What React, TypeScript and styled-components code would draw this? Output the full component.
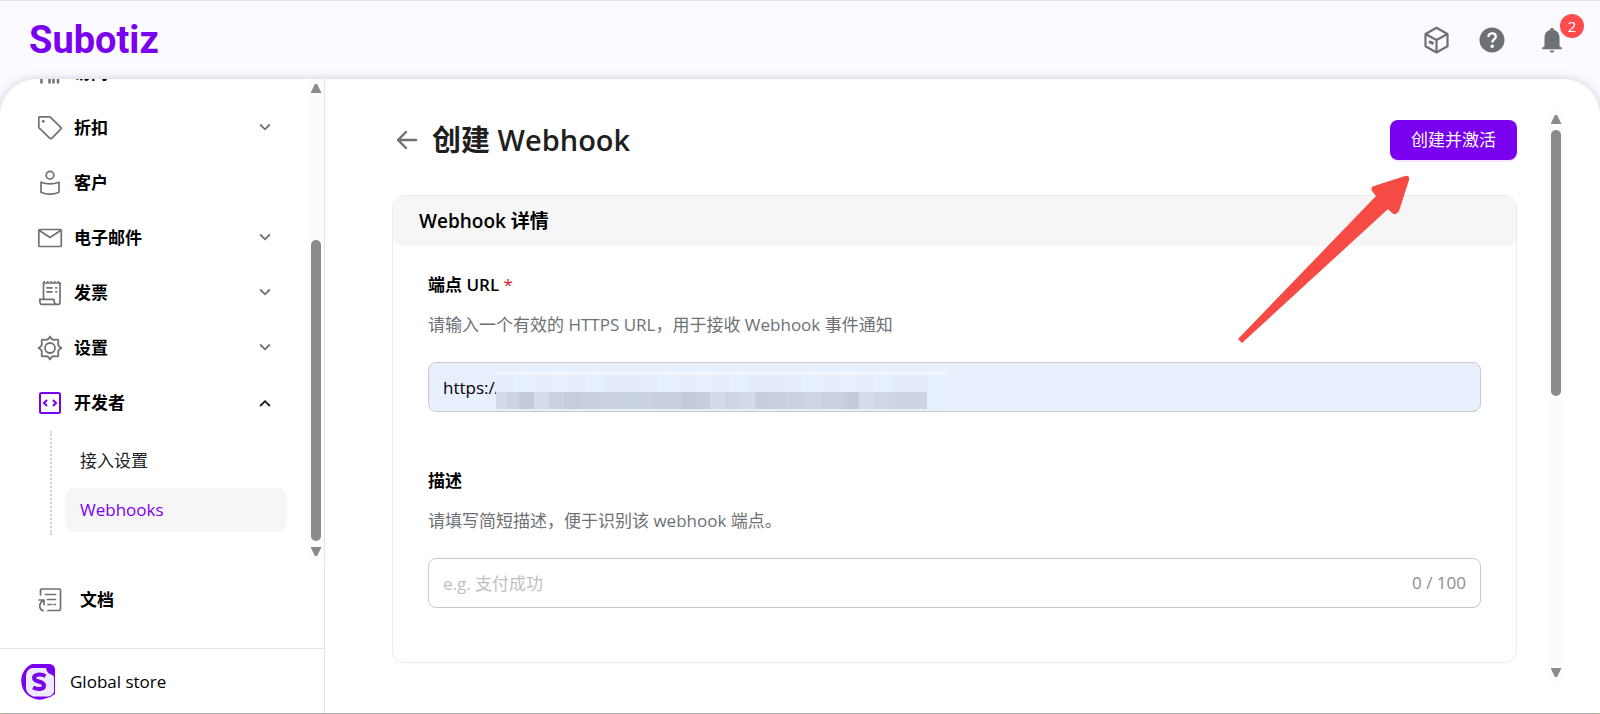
import React from "react";
import styled, { createGlobalStyle } from "styled-components";

const sans = `"Open Sans", "Noto Sans CJK SC", sans-serif`;

const GlobalStyle = createGlobalStyle`
  *, *::before, *::after { box-sizing: border-box; }
  body { margin: 0; background: #fbfaff; font-family: ${sans}; font-size: 17px; line-height: 24px; color: #000; }
  button, input { font: inherit; color: inherit; }
  h1, h2, p, ul { margin: 0; padding: 0; }
  ul { list-style: none; }
`;

const Shell = styled.div`
  height: 100vh;
  display: flex;
  flex-direction: column;
  border-top: 1px solid #e4e4e6;
  border-bottom: 1px solid #bebcb4;
`;

const Header = styled.header`
  flex: none;
  height: 78px;
  padding: 0 16px 0 29px;
  display: flex;
  align-items: center;
  justify-content: space-between;
`;

const Logo = styled.a`
  font: 700 38px/48px Roboto, sans-serif;
  color: #7a00f0;
  text-decoration: none;
`;

const HeaderActions = styled.div`
  display: flex;
  align-items: center;
  gap: 24px;
`;

const IconButton = styled.button`
  position: relative;
  width: 32px;
  height: 32px;
  padding: 0;
  border: 0;
  background: none;
  color: #6d7175;
  display: grid;
  place-items: center;
`;

const BellButton = styled(IconButton)`
  margin: 0 16px 0 4px;
`;

const Badge = styled.span`
  position: absolute;
  top: -10px;
  right: -16px;
  width: 24px;
  height: 24px;
  border-radius: 12px;
  background: #ff4d4f;
  color: #fff;
  font-size: 15px;
  line-height: 24px;
  text-align: center;
`;

const Panel = styled.div`
  flex: 1;
  min-height: 0;
  display: flex;
  background: #fff;
  border-radius: 36px 36px 0 0;
  box-shadow: 0 0 8px rgba(60, 50, 90, 0.24);
  overflow: hidden;
`;

const Sidebar = styled.aside`
  flex: none;
  width: 325px;
  border-right: 1px solid #e3e3e5;
  display: flex;
  flex-direction: column;
`;

const NavArea = styled.div`
  flex: 1;
  min-height: 0;
  display: flex;
`;

const Nav = styled.nav`
  flex: 1;
  overflow: hidden;
  display: flex;
  flex-direction: column;
  justify-content: flex-end;
  padding: 0 21px 26px 37px;
`;

const NavRow = styled.a`
  flex: none;
  height: 55px;
  padding-right: 16px;
  display: flex;
  align-items: center;
  gap: 11px;
  color: #6d7175;
  text-decoration: none;
`;

const NavLabel = styled.span`
  flex: 1;
  color: #000;
  font-weight: 700;
`;

const SubList = styled.ul`
  margin: 1px 0 0 13px;
  padding: 8px 0 3px 13px;
  border-left: 2px dotted #d2d2d4;
  display: flex;
  flex-direction: column;
  gap: 5px;
`;

const SubLink = styled.a<{ $active?: boolean }>`
  display: block;
  padding: 10px 15px;
  border-radius: 10px;
  background: ${(p) => (p.$active ? "#f6f6f6" : "transparent")};
  color: ${(p) => (p.$active ? "#7a00f0" : "#202223")};
  text-decoration: none;
`;

const DocsRow = styled(NavRow)`
  height: 87px;
  padding-bottom: 9px;
  margin: 0 37px;
  gap: 17px;
`;

const StoreRow = styled.a`
  height: 65px;
  padding: 2px 21px 0;
  display: flex;
  align-items: center;
  gap: 13px;
  border-top: 1px solid #e3e3e5;
  color: #000;
  text-decoration: none;
`;

const Track = styled.div`
  flex: none;
  width: 16px;
  padding: 5px 0;
  display: flex;
  flex-direction: column;
  align-items: center;
  gap: 6px;
  background: #fcfcfc;
`;

const Arrow = styled.span<{ $down?: boolean }>`
  width: 11px;
  height: 9px;
  background: #8b8b8b;
  clip-path: ${(p) => (p.$down ? "polygon(0 0, 100% 0, 60% 100%, 40% 100%)" : "polygon(40% 0, 60% 0, 100% 100%, 0 100%)")};
`;

const Rail = styled.div<{ $start: number; $size: number }>`
  flex: 1;
  width: 10px;
  display: grid;
  grid-template-rows: ${(p) => `${p.$start}fr ${p.$size}fr ${100 - p.$start - p.$size}fr`};
  &::before { content: ""; grid-row: 2; border-radius: 5px; background: #8b8b8b; }
`;

const Main = styled.main`
  flex: 1;
  min-width: 0;
  display: flex;
  padding: 31px 36px 31px 67px;
`;

const Content = styled.div`
  flex: 1;
  min-width: 0;
  padding: 10px 31px 0 0;
`;

const TitleRow = styled.div`
  display: flex;
  align-items: center;
  height: 40px;
  margin-bottom: 35px;
`;

const BackButton = styled(IconButton)`
  width: 30px;
  margin-right: 10px;
`;

const Title = styled.h1`
  flex: 1;
  font-size: 29px;
  line-height: 40px;
  font-weight: 700;
  color: #1f1f1f;
`;

const Latin = styled.span`
  font-weight: 600;
`;

const PrimaryButton = styled.button`
  width: 127px;
  height: 40px;
  padding: 0;
  border: 0;
  border-radius: 8px;
  background: #7a00f0;
  color: #fff;
  box-shadow: 0 2px 0 #f7e6ff;
`;

const Card = styled.section`
  border: 1px solid #ebebeb;
  border-radius: 12px;
`;

const CardHeader = styled.h2`
  padding: 13px 26px;
  border-radius: 12px 12px 8px 8px;
  background: #f6f6f6;
  font-size: 19px;
  line-height: 24px;
  font-weight: 700;
`;

const Fields = styled.div`
  padding: 27px 35px 54px;
  display: flex;
  flex-direction: column;
  gap: 57px;
`;

const Field = styled.div`
  display: flex;
  flex-direction: column;
`;

const Label = styled.label`
  font-weight: 700;
`;

const Required = styled.span`
  font-weight: 400;
  color: #e02020;
`;

const Hint = styled.p`
  margin: 16px 0 25px;
  color: #6d7175;
`;

const InputBox = styled.div<{ $filled?: boolean }>`
  position: relative;
  height: 50px;
  padding: 0 14px;
  display: flex;
  align-items: center;
  border: 1px solid #c9cacd;
  border-radius: 8px;
  background: ${(p) => (p.$filled ? "#e8effd" : "#fff")};
`;

const TextInput = styled.input`
  flex: 1;
  min-width: 0;
  height: 100%;
  padding: 0;
  border: 0;
  outline: 0;
  background: none;
  &::placeholder { color: #bfbfbf; opacity: 1; }
`;

const Counter = styled.span`
  color: #8c8c8c;
`;

const Mosaic = styled.svg`
  position: absolute;
  top: 9px;
  left: 67px;
`;

const ArrowMark = styled.svg`
  position: absolute;
  top: 174px;
  right: 188px;
  pointer-events: none;
`;

const icon = { width: 26, height: 26, viewBox: "0 0 26 26", fill: "none", stroke: "currentColor", strokeWidth: 1.5, strokeLinejoin: "round" as const, strokeLinecap: "round" as const, "aria-hidden": true };

const PeopleIcon = () => (
  <svg {...icon}><path d="M4.500 23.500v-5M12.500 23.500v-6M16.500 23.500v-6M21 23.500v-5" strokeWidth={2.500} strokeLinecap="butt" /></svg>
);
const TagIcon = () => (
  <svg {...icon}><path d="M2.500 1.800H13L24 12.600a1 1 0 0 1 0 1.300l-9.300 9.400a1.200 1.200 0 0 1-1.700 0L1.800 12.700V2.500a.7.7 0 0 1 .7-.7Z" strokeWidth={1.700} /><circle cx="6.200" cy="6.300" r="1" fill="currentColor" strokeWidth={1} /></svg>
);
const CustomerIcon = () => (
  <svg {...icon} strokeWidth={1.700}><circle cx="13" cy="5.200" r="3.800" /><path d="M4 12.200c6 2.200 12 2.200 18 0v10c-5.500 2.400-12.500 2.400-18 0Z" /></svg>
);
const MailIcon = () => (
  <svg {...icon} strokeWidth={1.700}><rect x="1.800" y="4.500" width="22.500" height="17" rx="1" /><path d="M2.500 5.500 13 12.500l10.700-7" /></svg>
);
const InvoiceIcon = () => (
  <svg {...icon} strokeWidth={1.700}><path d="M6.500 18.500V3M23 3v19.500c0 1-1 1.800-2 1.800H4.500c-1.400 0-1.700-2-1.700-5h14c.3 3 .8 5 2.700 5" /><path d="M6.500 3h16.500" /><path d="M6.500 1.800h16.500" strokeDasharray="1.500 2" strokeLinecap="butt" /><path d="M10 7.800h5M10 11.800h5M18.800 7.800h.8M18.800 11.800h.8" /></svg>
);
const GearIcon = () => (
  <svg {...icon} strokeWidth={1.800}>
    <path d="M13 1.500Q14.500 4.800 17 4.900Q20 4.300 21.100 4.900Q21.700 6 21.100 9Q21.200 11.500 24.500 13Q21.200 14.500 21.100 17Q21.700 20 21.100 21.100Q20 21.700 17 21.100Q14.500 21.200 13 24.500Q11.500 21.200 9 21.100Q6 21.700 4.900 21.100Q4.300 20 4.900 17Q4.800 14.500 1.500 13Q4.800 11.500 4.900 9Q4.300 6 4.900 4.900Q6 4.300 9 4.900Q11.500 4.800 13 1.500Z" />
    <circle cx="13" cy="13" r="5" />
  </svg>
);
const CodeIcon = () => (
  <svg {...icon} stroke="#7a00f0"><rect x="3" y="3" width="20" height="20" rx="1.500" strokeWidth={2} /><path d="m10 10-3 3 3 3M16 10l3 3-3 3" strokeWidth={2} strokeLinecap="butt" strokeLinejoin="miter" /></svg>
);
const DocsIcon = () => (
  <svg {...icon} strokeWidth={1.700}><path d="M3.500 8V3.300c0-.8.5-1.300 1.300-1.300h17.400c.8 0 1.300.5 1.300 1.300v18.900c0 .8-.5 1.300-1.300 1.300H11M8.500 7.500h10M10.500 12.500h8M11 17.500h3.500M17 17.500h1.500" /><path d="M2.200 13H7v4.500M6.800 13C2 16 1 21 6 23.800" /></svg>
);
const Chevron = ({ up }: { up?: boolean }) => (
  <svg width="12" height="10" viewBox="0 0 12 10" fill="none" stroke={up ? "#1a1a1a" : "#6d7175"} strokeWidth="1.800" aria-hidden="true">
    <path d={up ? "M1.200 8 6 3.200l4.800 4.800" : "M1.200 1.500 6 6.300l4.800-4.800"} />
  </svg>
);

const navItems = [
  { label: "访问", Icon: PeopleIcon },
  { label: "折扣", Icon: TagIcon, expandable: true },
  { label: "客户", Icon: CustomerIcon },
  { label: "电子邮件", Icon: MailIcon, expandable: true },
  { label: "发票", Icon: InvoiceIcon, expandable: true },
  { label: "设置", Icon: GearIcon, expandable: true },
  { label: "开发者", Icon: CodeIcon, expandable: true, open: true },
];

const mosaicTop = ["#e5edfd", "#e7eefc", "#e4ecfc", "#e6effd", "#e5edfc", "#e4ebfb", "#e6eefc", "#e5effd"];
const mosaicCells: [number, string][] = [
  [10, "#d3dae9"], [13, "#ccd3e2"], [15, "#c4cad7"], [15, "#d5dcec"], [15, "#cad0df"], [17, "#c6ccda"], [17, "#c8cfdf"], [22, "#c9d1e0"],
  [17, "#c8d2e1"], [17, "#cad1e1"], [13, "#c8cedd"], [15, "#c7cedd"], [14, "#c4cad8"], [14, "#c6ccda"], [15, "#d3daea"], [15, "#cdd4e4"],
  [15, "#d3daea"], [15, "#c6cddc"], [15, "#c7cedc"], [20, "#c9d0df"], [17, "#cdd4e3"], [22, "#c9d0df"], [15, "#c5cbd9"], [15, "#d4dbea"], [15, "#d0d7e7"], [18, "#ccd3e3"], [20, "#ccd3e3"],
];

const ScrollTrack = ({ start, size }: { start: number; size: number }) => (
  <Track aria-hidden="true"><Arrow /><Rail $start={start} $size={size} /><Arrow $down /></Track>
);

const MosaicPattern = () => {
  let x = 0;
  return (
    <Mosaic width="451" height="38" viewBox="0 0 451 38" aria-hidden="true">
      <rect width="451" height="37" fill="#e6effd" />
      <rect width="451" height="3" fill="#f4f6fd" />
      {Array.from({ length: 24 }, (_, i) => <rect key={i} x={i * 18} y="3" width="18" height="17" fill={mosaicTop[(i * 3) % 8]} />)}
      {mosaicCells.map(([w, fill], i) => {
        const cell = <rect key={`c${i}`} x={x} y="20" width={w} height="17" fill={fill} />;
        x += w;
        return cell;
      })}
    </Mosaic>
  );
};

export default function App() {
  return (
    <>
      <GlobalStyle />
      <Shell>
        <Header>
          <Logo href="#">Subotiz</Logo>
          <HeaderActions>
            <IconButton aria-label="产品">
              <svg width="28" height="28" viewBox="0 0 28 28" fill="none" stroke="currentColor" strokeWidth="2.200" strokeLinejoin="round">
                <path d="M14.500 1.800 25.500 8v12.300l-11 6.200-11-6.200V8Z" /><path d="M3.500 8l11 6 11-6M14.500 14v12.500" /><path d="m7 15.500 4.500 2.200" strokeWidth="3" />
              </svg>
            </IconButton>
            <IconButton aria-label="帮助">
              <svg width="26" height="26" viewBox="0 0 26 26">
                <circle cx="13" cy="13" r="12.500" fill="currentColor" />
                <path d="M9.400 10c0-2.300 1.500-3.700 3.700-3.700s3.700 1.400 3.700 3.300c0 2.800-3.600 2.900-3.600 5.900" fill="none" stroke="#fff" strokeWidth="2.300" /><circle cx="13.200" cy="19.200" r="1.700" fill="#fff" />
              </svg>
            </IconButton>
            <BellButton aria-label="通知">
              <svg width="22" height="26" viewBox="0 0 22 26" fill="currentColor">
                <path d="M11 1c1.200 0 2 .8 2 1.900 3.700.9 5.500 3.700 5.500 7.600v8.700l2.300 1.300v1.700H1.200v-1.700l2.300-1.300v-8.700c0-3.900 1.800-6.700 5.500-7.600C9 1.800 9.800 1 11 1ZM8.500 23.500h5L12 25.500h-2Z" />
              </svg>
              <Badge>2</Badge>
            </BellButton>
          </HeaderActions>
        </Header>
        <Panel>
          <Sidebar>
            <NavArea>
              <Nav>
                {navItems.map(({ label, Icon, expandable, open }) => (
                  <NavRow href="#" key={label}>
                    <Icon /><NavLabel>{label}</NavLabel>{expandable && <Chevron up={open} />}
                  </NavRow>
                ))}
                <SubList>
                  <li><SubLink href="#">接入设置</SubLink></li>
                  <li><SubLink href="#" $active>Webhooks</SubLink></li>
                </SubList>
              </Nav>
              <ScrollTrack start={32} size={68} />
            </NavArea>
            <DocsRow href="#"><DocsIcon /><NavLabel>文档</NavLabel></DocsRow>
            <StoreRow href="#">
              <svg width="36" height="36" viewBox="0 0 36 36" aria-hidden="true">
                <path d="M11 0h18q5 1 5 6v24q-4 3-8 4-6 3-12 1Q5 32 2 25-1 18 1 11 4 3 11 0Z" fill="#7a00f0" />
                <path d="M11 4h14q1 5 4 6 4 1 4 4v14q-2 4-6 4.500H12Q6 30 5 25V11q1-6 6-7Z" fill="#efeafd" />
                <path d="M24.500 12C19 9.500 13 10.500 13 14c0 4.500 10 2.500 10 7.500 0 4-6 4.500-11 2" fill="none" stroke="#7a00f0" strokeWidth="4" />
              </svg>
              Global store
            </StoreRow>
          </Sidebar>
          <Main>
            <Content>
              <TitleRow>
                <BackButton aria-label="返回">
                  <svg width="22" height="20" viewBox="0 0 22 20" fill="none" stroke="currentColor" strokeWidth="2.400" strokeLinecap="round" strokeLinejoin="round"><path d="M20 10H2M10 2l-8 8 8 8" /></svg>
                </BackButton>
                <Title>创建 <Latin>Webhook</Latin></Title>
                <PrimaryButton>创建并激活</PrimaryButton>
              </TitleRow>
              <Card>
                <CardHeader><Latin>Webhook</Latin> 详情</CardHeader>
                <Fields>
                  <Field>
                    <Label htmlFor="url">端点 <Latin>URL</Latin> <Required>*</Required></Label>
                    <Hint>请输入一个有效的 HTTPS URL，用于接收 Webhook 事件通知</Hint>
                    <InputBox $filled>
                      <TextInput id="url" defaultValue="https://" />
                      <MosaicPattern />
                    </InputBox>
                  </Field>
                  <Field>
                    <Label htmlFor="description">描述</Label>
                    <Hint>请填写简短描述，便于识别该 webhook 端点。</Hint>
                    <InputBox>
                      <TextInput id="description" placeholder="e.g. 支付成功" maxLength={100} />
                      <Counter>0 / 100</Counter>
                    </InputBox>
                  </Field>
                </Fields>
              </Card>
            </Content>
            <ScrollTrack start={0} size={50} />
          </Main>
        </Panel>
      </Shell>
      <ArrowMark width="174" height="172" viewBox="0 0 174 172" aria-hidden="true">
        <path d="M0 165 138 22 134 17Q132 13 136 12L167 2Q172 1 171 6L161 37Q158 42 154 39L150 35 4 169Z" fill="#f64a45" />
      </ArrowMark>
    </>
  );
}
